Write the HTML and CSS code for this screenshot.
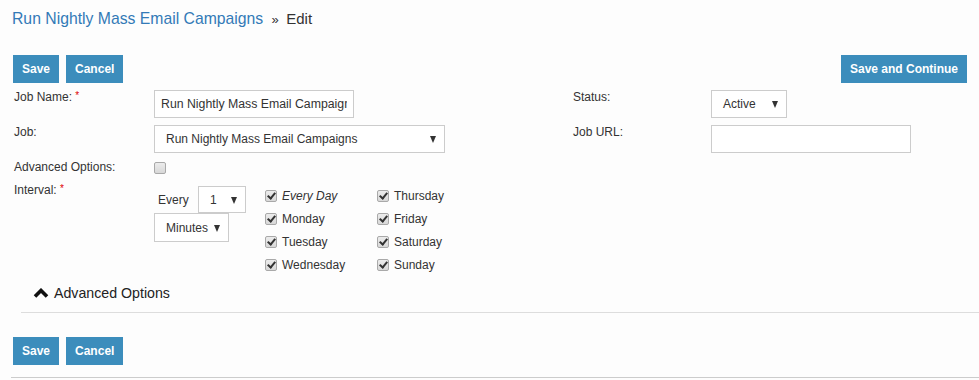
FILE: index.html
```
<!DOCTYPE html>
<html lang="en">
<head>
    <meta charset="UTF-8">
    <meta name="viewport" content="width=device-width, initial-scale=1.0">
    <title>Edit Job</title>
    <link rel="stylesheet" href="styles.css">
</head>
<body>
    <div class="page">
        <h1 class="crumbs">
            <a href="#">Run Nightly Mass Email Campaigns</a>
            <span class="sep">&raquo;</span>
            <span class="current">Edit</span>
        </h1>

        <div class="toolbar">
            <div class="group">
                <button type="button" class="btn">Save</button>
                <button type="button" class="btn">Cancel</button>
            </div>
            <button type="button" class="btn">Save and Continue</button>
        </div>

        <form class="job-form">
            <label class="lbl" for="jobName">Job Name: <span class="req">*</span></label>
            <div class="field">
                <input type="text" id="jobName" class="text name-input" value="Run Nightly Mass Email Campaigns">
            </div>
            <label class="lbl" for="status">Status:</label>
            <div class="field">
                <span class="select status-select"><span class="val">Active</span></span>
            </div>

            <label class="lbl">Job:</label>
            <div class="field">
                <span class="select job-select"><span class="val">Run Nightly Mass Email Campaigns</span></span>
            </div>
            <label class="lbl" for="jobUrl">Job URL:</label>
            <div class="field">
                <input type="text" id="jobUrl" class="text url-input">
            </div>

            <label class="lbl">Advanced Options:</label>
            <div class="field field-short">
                <span class="cb"></span>
            </div>
            <div></div>
            <div></div>

            <label class="lbl">Interval: <span class="req">*</span></label>
            <div class="field interval">
                <div class="every">
                    <div class="every-row">
                        <span class="every-text">Every</span>
                        <span class="select num-select"><span class="val">1</span></span>
                    </div>
                    <span class="select unit-select"><span class="val">Minutes</span></span>
                </div>
                <div class="days">
                    <span class="day"><span class="cb on"></span><em>Every Day</em></span>
                    <span class="day"><span class="cb on"></span>Thursday</span>
                    <span class="day"><span class="cb on"></span>Monday</span>
                    <span class="day"><span class="cb on"></span>Friday</span>
                    <span class="day"><span class="cb on"></span>Tuesday</span>
                    <span class="day"><span class="cb on"></span>Saturday</span>
                    <span class="day"><span class="cb on"></span>Wednesday</span>
                    <span class="day"><span class="cb on"></span>Sunday</span>
                </div>
            </div>
        </form>

        <div class="adv-head">
            <svg class="chevron" width="16" height="10" viewBox="0 0 16 10">
                <polyline points="2,8.5 8,2.5 14,8.5" fill="none" stroke="#111" stroke-width="3.6"/>
            </svg>
            <span>Advanced Options</span>
        </div>

        <div class="toolbar bottom">
            <div class="group">
                <button type="button" class="btn">Save</button>
                <button type="button" class="btn">Cancel</button>
            </div>
        </div>
        <div class="foot-line"></div>
    </div>
</body>
</html>
```

FILE: styles.css
```
body {
    margin: 0;
    padding: 0;
    background: #fdfdfd;
    font-family: "Liberation Sans", Arial, sans-serif;
    font-size: 12px;
    color: #333;
}
.page {
    padding: 0 12px 0 13px;
}
.crumbs {
    margin: 0;
    padding-top: 10px;
    font-size: 15.75px;
    font-weight: normal;
    line-height: 18px;
}
.crumbs a {
    color: #337ab7;
    text-decoration: none;
    margin-left: -1px;
}
.crumbs .sep {
    color: #333;
    font-size: 13px;
    margin: 0 3px 0 4px;
}
.crumbs .current {
    color: #333;
    font-size: 15px;
}
.toolbar {
    display: flex;
    justify-content: space-between;
    margin-top: 26px;
}
.toolbar .group {
    display: flex;
    gap: 7px;
}
.btn {
    height: 28px;
    padding: 0 9px;
    border: none;
    background-color: #3c8dbc;
    color: #fff;
    font-family: "Liberation Sans", Arial, sans-serif;
    font-size: 12px;
    font-weight: bold;
    cursor: pointer;
}
.job-form {
    display: grid;
    grid-template-columns: 141px 418px 139px 1fr;
    row-gap: 7px;
    margin-top: 7px;
}
.lbl {
    line-height: 15px;
    padding-left: 1px;
}
.req {
    color: #d00;
    font-size: 10px;
    vertical-align: top;
    position: relative;
    top: -2px;
}
.text {
    box-sizing: border-box;
    height: 28px;
    border: 1px solid #ccc;
    background: #fff;
    padding: 0 6px;
    font-family: "Liberation Sans", Arial, sans-serif;
    font-size: 12.3px;
    color: #333;
    outline: none;
}
.name-input {
    width: 200px;
}
.url-input {
    width: 200px;
}
.select {
    box-sizing: border-box;
    display: inline-flex;
    align-items: center;
    height: 28px;
    padding: 0 18px 0 11px;
    border: 1px solid #ccc;
    background: #fff;
    position: relative;
    white-space: nowrap;
}
.select::after {
    content: "";
    position: absolute;
    right: 8px;
    top: 50%;
    margin-top: -3px;
    border-left: 3.5px solid transparent;
    border-right: 3.5px solid transparent;
    border-top: 7px solid #333;
}
.job-select {
    width: 291px;
}
.status-select {
    width: 76px;
}
.num-select {
    width: 48px;
    height: 27px;
}
.unit-select {
    width: 75px;
    height: 29px;
}
.field-short {
    box-sizing: border-box;
    height: 16px;
    padding-top: 2px;
}
.cb {
    box-sizing: border-box;
    display: inline-block;
    width: 12px;
    height: 12px;
    border: 1px solid #a9a9a9;
    border-radius: 2px;
    background: linear-gradient(#ececec, #d8d8d8);
    position: relative;
    vertical-align: top;
}
.cb.on::after {
    content: "";
    position: absolute;
    left: 3px;
    top: 0;
    width: 3px;
    height: 6px;
    border-right: 2px solid #333;
    border-bottom: 2px solid #333;
    transform: rotate(40deg);
}
.interval {
    grid-column: 2 / 5;
    display: flex;
}
.every {
    width: 111px;
    padding-top: 3px;
}
.every-row {
    display: flex;
    align-items: center;
}
.every-text {
    width: 44px;
    padding-left: 4px;
    box-sizing: border-box;
}
.days {
    display: grid;
    grid-template-columns: 112px 112px;
    grid-auto-rows: 23px;
    padding-top: 1px;
}
.day {
    display: flex;
    align-items: center;
    gap: 5px;
}
.day em {
    font-style: italic;
}
.adv-head {
    display: flex;
    align-items: center;
    gap: 5px;
    margin: 4px -12px 0 8px;
    padding: 4px 0 10px 12px;
    border-bottom: 1px solid #ddd;
    font-size: 14.2px;
    color: #222;
    line-height: 18px;
}
.toolbar.bottom {
    margin-top: 24px;
}
.foot-line {
    margin: 12px -12px 0 -2px;
    border-top: 1px solid #ccc;
}
```
